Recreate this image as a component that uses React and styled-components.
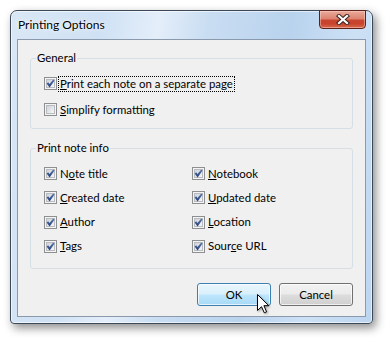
import React from 'react';
import styled, { createGlobalStyle } from 'styled-components';

const Global = createGlobalStyle`
  html, body { margin: 0; padding: 0; background: #fff; }
  body { font-family: "Segoe UI", Lato, "Noto Sans", sans-serif; font-size: 11.4px; color: #000; }
  * { box-sizing: border-box; }
`;

const Stage = styled.div`
  position: relative;
  width: 391px;
  height: 342px;
  padding: 10px 0 0 10px;
  overflow: hidden;
`;

const Window = styled.div`
  width: 363px;
  display: flex;
  flex-direction: column;
  padding: 0 6px 6px;
  border: 1px solid #3a4857;
  border-radius: 7px 7px 4px 4px;
  background: linear-gradient(100deg, #d9e7f5 0%, #cfe1f4 22%, #e4eefa 36%, #c9ddf2 48%, #b9d3ee 68%, #cde1f5 84%, #bcd5ef 100%);
  box-shadow: 3px 4px 10px rgba(0, 0, 0, 0.45), inset 0 0 0 1px rgba(255, 255, 255, 0.6);
`;

const TitleBar = styled.div`
  height: 28px;
  display: flex;
  justify-content: space-between;
  align-items: flex-start;
  padding-left: 1px;
`;

const Title = styled.span`
  align-self: center;
  font-size: 12px;
  line-height: 16px;
  color: #000;
  text-shadow: 0 0 6px rgba(255, 255, 255, 0.95), 0 0 2px rgba(255, 255, 255, 0.8);
`;

const CloseButton = styled.div`
  width: 47px;
  height: 19px;
  margin-top: -1px;
  display: flex;
  align-items: center;
  justify-content: center;
  border: 1px solid #5e2019;
  border-radius: 0 0 4px 4px;
  background: linear-gradient(#e9a99b 0%, #dc8471 45%, #c9452f 55%, #c8432c 75%, #d66b4f 100%);
  box-shadow: inset 0 0 0 1px rgba(255, 220, 210, 0.45);
`;

const Client = styled.div`
  background: #f0f0f0;
  border: 1px solid #8a99ab;
  padding: 10px 12px 10px 12px;
  display: flex;
  flex-direction: column;
`;

const Group = styled.fieldset`
  margin: 0;
  margin-top: ${(p) => p.$gap || 0}px;
  min-width: 0;
  padding: 0 5px;
  border: 1px solid #d5dfe5;
  border-radius: 3px;
`;

const Legend = styled.legend`
  padding: 0 1px;
  line-height: 16px;
`;

const Rows = styled.div`
  display: flex;
  flex-direction: column;
  gap: 5px;
  padding: 7px 0 ${(p) => p.$pb}px 8px;
`;

const Grid = styled.div`
  display: grid;
  grid-template-columns: 148px 1fr;
  grid-auto-rows: 21px;
  row-gap: 3.33px;
  padding: 7px 0 11px 8px;
`;

const Row = styled.div`
  height: 21px;
  display: flex;
  align-items: center;
`;

const Box = styled.span`
  width: 13px;
  height: 13px;
  flex: none;
  display: grid;
  border: 1px solid #8e8f8f;
  background: #f4f4f4;
  padding: 1px;
`;

const BoxFill = styled.span`
  grid-area: 1 / 1;
  border: 1px solid #b8bcc2;
  background: linear-gradient(135deg, #cfd3d8 0%, #e6e8ea 60%, #f6f6f6 100%);
`;

const Tick = styled.svg`
  grid-area: 1 / 1;
  width: 9px;
  height: 9px;
`;

const Label = styled.span`
  margin-left: 2px;
  padding: 0 1px;
  line-height: 14px;
  white-space: nowrap;
  outline: ${(p) => (p.$focus ? '1px dotted #000' : 'none')};
  outline-offset: 0;
`;

const Buttons = styled.div`
  margin-top: 14px;
  display: flex;
  justify-content: flex-end;
  gap: 8px;
`;

const Button = styled.div`
  width: 74px;
  height: 23px;
  display: flex;
  align-items: center;
  justify-content: center;
  border-radius: 3px;
  border: 1px solid ${(p) => (p.$hot ? '#3c7fb1' : '#707070')};
  background: ${(p) =>
    p.$hot
      ? 'linear-gradient(#eaf6fd 0%, #d9f0fc 48%, #bee6fd 52%, #a7d9f5 100%)'
      : 'linear-gradient(#f2f2f2 0%, #ebebeb 48%, #dddddd 52%, #cfcfcf 100%)'};
  box-shadow: inset 0 0 0 1px rgba(255, 255, 255, 0.7);
`;

const Cursor = styled.svg`
  position: absolute;
  left: 257px;
  top: 294px;
  width: 13px;
  height: 20px;
  filter: drop-shadow(1px 1px 1px rgba(0, 0, 0, 0.35));
`;

function Check({ checked }) {
  return (
    <Box>
      <BoxFill />
      {checked && (
        <Tick viewBox="0 0 9 9">
          <defs>
            <linearGradient id="tk" x1="0" y1="0" x2="0" y2="1">
              <stop offset="0" stopColor="#5c78b0" />
              <stop offset="1" stopColor="#233f77" />
            </linearGradient>
          </defs>
          <polygon points="0.6,4.4 2.2,3.2 3.5,5 7.2,0.4 8.6,1.4 3.6,8.4" fill="url(#tk)" />
        </Tick>
      )}
    </Box>
  );
}

function Option({ checked, focus, children }) {
  return (
    <Row>
      <Check checked={checked} />
      <Label $focus={focus}>{children}</Label>
    </Row>
  );
}

export default function App() {
  return (
    <>
      <Global />
      <Stage>
        <Window>
          <TitleBar>
            <Title>Printing Options</Title>
            <CloseButton>
              <svg width="14" height="11" viewBox="0 0 14 11">
                <path d="M3 2 L11 9 M11 2 L3 9" stroke="#3b2420" strokeWidth="4.2" strokeLinecap="square" />
                <path d="M3 2 L11 9 M11 2 L3 9" stroke="#ffffff" strokeWidth="2.2" strokeLinecap="square" />
              </svg>
            </CloseButton>
          </TitleBar>
          <Client>
            <Group>
              <Legend>General</Legend>
              <Rows $pb={8}>
                <Option checked focus>
                  <u>P</u>rint each note on a separate page
                </Option>
                <Option>
                  <u>S</u>implify formatting
                </Option>
              </Rows>
            </Group>
            <Group $gap={11}>
              <Legend>Print note info</Legend>
              <Grid>
                <Option checked>
                  N<u>o</u>te title
                </Option>
                <Option checked>
                  <u>N</u>otebook
                </Option>
                <Option checked>
                  <u>C</u>reated date
                </Option>
                <Option checked>
                  <u>U</u>pdated date
                </Option>
                <Option checked>
                  <u>A</u>uthor
                </Option>
                <Option checked>
                  <u>L</u>ocation
                </Option>
                <Option checked>
                  <u>T</u>ags
                </Option>
                <Option checked>
                  Sour<u>c</u>e URL
                </Option>
              </Grid>
            </Group>
            <Buttons>
              <Button $hot>OK</Button>
              <Button>Cancel</Button>
            </Buttons>
          </Client>
        </Window>
        <Cursor viewBox="0 0 13 20">
          <path d="M0.5 0.5 L0.5 16.5 L4.5 12.7 L7.3 18.8 L9.6 17.8 L6.9 11.7 L11.8 11.7 Z" fill="#fff" stroke="#000" strokeWidth="1" strokeLinejoin="miter" />
        </Cursor>
      </Stage>
    </>
  );
}
